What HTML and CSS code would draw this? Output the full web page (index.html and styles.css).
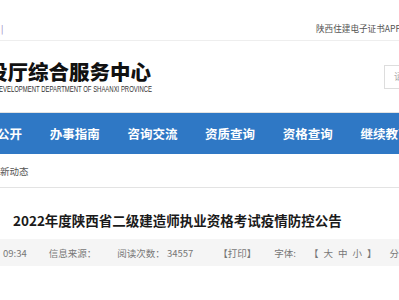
FILE: index.html
```
<!DOCTYPE html>
<html>

<head>
	<title>陕西省二级建造师执业资格考试疫情防控公告</title>
	<meta charset="utf-8">
	<link rel="stylesheet" href="styles.css">
</head>

<body>
	<div class="topbar">
		<span class="sep">|</span>
		<span class="top-links">陕西住建电子证书APP下载</span>
	</div>
	<div class="header">
		<div class="logo">
			<div class="logo-cn">陕西省住房和城乡建设厅综合服务中心</div>
			<div class="logo-en">HOUSING AND URBAN-RURAL DEVELOPMENT DEPARTMENT OF SHAANXI PROVINCE</div>
		</div>
		<div class="search">请输入关键字</div>
	</div>
	<div class="nav">
		<a>政务公开</a>
		<a>办事指南</a>
		<a>咨询交流</a>
		<a>资质查询</a>
		<a>资格查询</a>
		<a>继续教育</a>
	</div>
	<div class="crumb">
		<span>最新动态</span>
	</div>
	<h1 class="title">2022年度陕西省二级建造师执业资格考试疫情防控公告</h1>
	<div class="info">
		<span class="time">09:34</span>
		<span class="source">信息来源：</span>
		<span class="reads">阅读次数： 34557</span>
		<span class="print">【打印】</span>
		<span class="font-label">字体:</span>
		<span class="sizes">
			<span>【</span><span>大</span><span>中</span><span>小</span><span>】</span>
		</span>
		<span class="share">分享到：</span>
	</div>
</body>

</html>
```
FILE: styles.css
```
* {
	margin: 0;
	padding: 0;
}

html,
body {
	overflow: hidden;
}

body {
	width: 399px;
	height: 300px;
	background: #fff;
	font-family: "Noto Sans CJK SC", sans-serif;
	color: #555;
}

.topbar {
	height: 41px;
	box-sizing: border-box;
	padding-top: 22px;
	border-bottom: 1px solid #eeeeee;
	display: flex;
	font-size: 8.6px;
	line-height: 12px;
	white-space: nowrap;
}

.sep {
	margin-left: 1px;
	color: #8a6fb5;
}

.top-links {
	margin-left: auto;
	width: 83px;
	color: #555;
}

.header {
	height: 72px;
	box-sizing: border-box;
	border-bottom: 1px solid #e2e2e2;
	display: flex;
	white-space: nowrap;
}

.logo {
	width: 152px;
	padding-top: 18px;
	display: flex;
	flex-direction: column;
	align-items: flex-end;
}

.logo-cn {
	font-size: 20.5px;
	line-height: 24px;
	font-weight: 900;
	color: #111;
	margin-right: 1px;
}

.logo-en {
	font-family: "Liberation Sans", sans-serif;
	font-size: 8.5px;
	line-height: 10px;
	color: #333;
	transform: scaleX(0.7);
	transform-origin: right center;
	margin-top: 1px;
}

.search {
	margin-left: 232px;
	margin-top: 24px;
	width: 160px;
	height: 24px;
	box-sizing: border-box;
	border: 1px solid #dddddd;
	padding-left: 9px;
	font-size: 9px;
	line-height: 22px;
	color: #aaa;
	flex-shrink: 0;
}

.nav {
	height: 41px;
	background: #2f78c5;
	display: flex;
	align-items: center;
	gap: 27.7px;
	white-space: nowrap;
}

.nav a {
	color: #fff;
	font-size: 12.5px;
	font-weight: bold;
	flex-shrink: 0;
}

.nav a:first-child {
	margin-left: -28px;
}

.crumb {
	height: 33px;
	border-bottom: 1px solid #e3e3e3;
	display: flex;
	align-items: center;
	font-size: 9.5px;
	color: #555;
	white-space: nowrap;
}

.crumb span {
	margin-left: -9.5px;
}

.title {
	padding-top: 22px;
	padding-left: 13px;
	margin-bottom: 9px;
	font-size: 13.5px;
	line-height: 20px;
	font-weight: bold;
	color: #1a1a1a;
	white-space: nowrap;
}

.info {
	height: 27px;
	background: #f5f5f5;
	display: flex;
	align-items: center;
	font-size: 9.5px;
	color: #777;
	white-space: nowrap;
}

.time {
	margin-left: 3px;
}

.source {
	margin-left: 22px;
}

.reads {
	margin-left: 21px;
}

.print {
	margin-left: 25px;
}

.font-label {
	margin-left: 18px;
}

.sizes {
	margin-left: 13px;
	display: flex;
	gap: 5px;
}

.share {
	margin-left: 13px;
}
```
